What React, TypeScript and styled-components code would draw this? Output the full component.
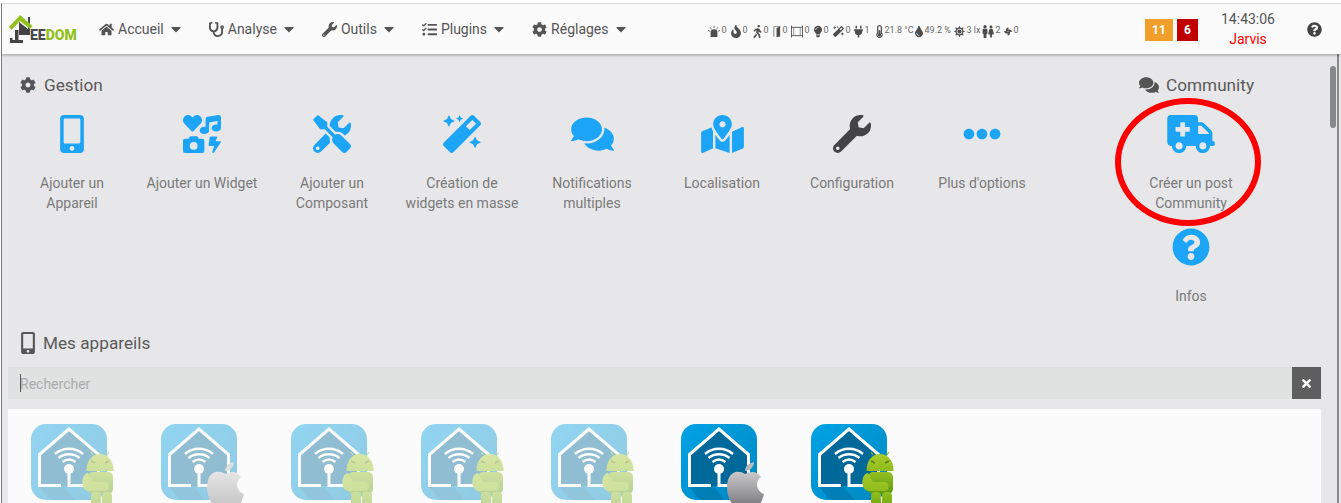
import type { ReactNode } from 'react';
import styled, { createGlobalStyle } from 'styled-components';
import {
  FaAmbulance,
  FaCaretDown,
  FaCog,
  FaComments,
  FaEllipsisH,
  FaFan,
  FaFemale,
  FaFire,
  FaHome,
  FaIcons,
  FaLightbulb,
  FaMagic,
  FaMale,
  FaMapMarkedAlt,
  FaMobileAlt,
  FaPlug,
  FaQuestionCircle,
  FaStethoscope,
  FaSun,
  FaTasks,
  FaThermometerHalf,
  FaTimes,
  FaTint,
  FaTools,
  FaWalking,
  FaWrench,
} from 'react-icons/fa';

const GlobalStyle = createGlobalStyle`
  html, body {
    margin: 0;
    height: 503px;
    overflow: hidden;
    background: #fff;
    font-family: Roboto, "Liberation Sans", sans-serif;
  }
`;

const Page = styled.div`
  height: 500px;
  margin-top: 3px;
  margin-left: 1px;
  display: flex;
  flex-direction: column;
  background: #e7e7e9;
  border-left: 1px solid #777;
  border-top: 1px solid #dcdcdc;
  overflow: hidden;
`;

const Header = styled.header`
  flex: none;
  height: 50px;
  display: flex;
  align-items: center;
  padding: 0 19px 0 6px;
  background: #fafafa;
  box-shadow: 0 1px 3px rgba(0, 0, 0, 0.35);
  position: relative;
  z-index: 2;
`;

const Logo = styled.div`
  width: 71px;
  height: 32px;
  margin-top: 1px;
  display: flex;
  align-items: flex-end;
  svg {
    flex: none;
    width: 26px;
    height: 32px;
  }
`;

const LogoText = styled.span`
  margin: 0 0 3px -4px;
  font-size: 14px;
  line-height: 16px;
  font-weight: 900;
  color: #4a4a4a;
  b {
    color: #93c01f;
    font-weight: 900;
  }
`;

const Menu = styled.nav`
  display: flex;
  gap: 28px;
  margin-left: 20px;
`;

const MenuItem = styled.a`
  display: flex;
  align-items: center;
  gap: 4px;
  font-size: 14px;
  color: #555;
  svg {
    width: 15px;
    height: 15px;
  }
  svg:last-child {
    width: 10px;
    height: 16px;
    margin-left: 3px;
  }
`;

const StatusBar = styled.div`
  display: flex;
  gap: 5px;
  margin-left: 82px;
  margin-top: 4px;
`;

const Stat = styled.span<{ $width: number; $iconWidth: number }>`
  width: ${(p) => p.$width}px;
  display: flex;
  align-items: flex-start;
  gap: 1px;
  font-size: 9px;
  line-height: 10px;
  color: #666;
  white-space: nowrap;
  svg {
    flex: none;
    width: ${(p) => p.$iconWidth}px;
    height: 13px;
    color: #4d4d4d;
  }
  span {
    margin: 0 0 0 1px;
  }
`;

const PeopleIcon = styled.i`
  flex: none;
  display: flex;
  svg {
    width: 6px;
  }
`;

const Badges = styled.div`
  display: flex;
  gap: 4px;
  margin-left: auto;
  margin-top: 2px;
`;

const Badge = styled.span<{ $color: string; $width: number }>`
  width: ${(p) => p.$width}px;
  height: 22px;
  display: flex;
  align-items: center;
  justify-content: center;
  background: ${(p) => p.$color};
  color: #fff;
  font-size: 12px;
  font-weight: 700;
`;

const Clock = styled.div`
  width: 60px;
  margin-left: 20px;
  text-align: center;
  font-size: 14px;
  line-height: 20px;
  color: #555;
  div {
    color: #f00;
  }
`;

const HelpButton = styled.span`
  display: flex;
  margin-left: 29px;
  color: #444;
  font-size: 15px;
`;

const Body = styled.div`
  flex: 1;
  min-height: 0;
  display: flex;
`;

const Content = styled.main`
  flex: 1;
  min-width: 0;
  padding: 19px 6px 0 5px;
`;

const Scrollbar = styled.div`
  flex: none;
  width: 12px;
  padding: 12px 0 0 3px;
  box-sizing: border-box;
  border-right: 2px solid #8a8a8a;
  margin-right: 2px;
`;

const ScrollThumb = styled.div`
  width: 6px;
  height: 62px;
  border-radius: 3px;
  background: #85888d;
`;

const TopRow = styled.div`
  display: flex;
  justify-content: space-between;
  padding-right: 65px;
`;

const SectionTitle = styled.h2`
  margin: 0;
  height: 24px;
  display: flex;
  align-items: center;
  gap: 8px;
  padding-left: 13px;
  font-size: 17.2px;
  font-weight: 400;
  color: #5a5a5a;
  white-space: nowrap;
  svg {
    width: 16px;
    height: 16px;
    color: #555;
  }
`;

const CommunityTitle = styled(SectionTitle)`
  padding-left: 13px;
  gap: 7px;
  svg {
    width: 20px;
    height: 18px;
  }
`;

const TileGrid = styled.div`
  display: flex;
`;

const CommunityColumn = styled.section`
  width: 130px;
  position: relative;
`;

const Tile = styled.a`
  width: 130px;
  height: 113px;
  padding-top: 18px;
  box-sizing: border-box;
  display: flex;
  flex-direction: column;
  align-items: center;
  text-align: center;
  font-size: 14px;
  line-height: 20px;
  color: #7a7a7a;
`;

const TileIcon = styled.span<{ $dark?: boolean; $width?: number }>`
  height: 38px;
  margin-bottom: 20px;
  color: ${(p) => (p.$dark ? '#444448' : '#1ca5f6')};
  svg {
    display: block;
    width: ${(p) => p.$width ?? 38}px;
    height: 38px;
  }
`;

const RedCircle = styled.div`
  position: absolute;
  left: -11px;
  top: 25px;
  width: 146px;
  height: 128px;
  box-sizing: border-box;
  border: 6px solid #f00;
  border-radius: 50%;
`;

const DevicesTitle = styled(SectionTitle)`
  margin-top: 8px;
  padding-left: 14px;
  svg {
    width: 14px;
    height: 22px;
  }
`;

const SearchRow = styled.div`
  display: flex;
  height: 32px;
  margin: 12px 0 10px 1px;
  position: relative;
`;

const SearchInput = styled.input`
  flex: 1;
  min-width: 0;
  border: 0;
  outline: 0;
  padding: 1px 0 0 12px;
  background: #e0e2e1;
  font: 14px Roboto, "Liberation Sans", sans-serif;
  &::placeholder {
    color: #a9abad;
    opacity: 1;
  }
`;

const TextCaret = styled.i`
  position: absolute;
  left: 12px;
  top: 7px;
  width: 1px;
  height: 18px;
  background: #555;
`;

const ClearButton = styled.button`
  flex: none;
  width: 29px;
  border: 0;
  padding: 0;
  display: flex;
  align-items: center;
  justify-content: center;
  background: #5e5e5e;
  color: #fff;
  svg {
    width: 13px;
    height: 13px;
  }
`;

const DevicePanel = styled.div`
  height: 100px;
  margin-left: 1px;
  padding-top: 15px;
  box-sizing: border-box;
  display: flex;
  background: #fbfbfb;
  overflow: hidden;
`;

const DeviceTile = styled.div<{ $faded: boolean }>`
  width: 130px;
  padding-left: 23px;
  box-sizing: border-box;
  opacity: ${(p) => (p.$faded ? 0.42 : 1)};
  svg {
    display: block;
    overflow: visible;
  }
`;

const SirenIcon = () => (
  <svg viewBox="0 0 14 13" fill="currentColor">
    <path d="M3 13V8a4 4 0 0 1 8 0v5z" />
    <path d="M0 5l2.5 1.5M2.5 1.5L4 4M7 0v2.5M11.5 1.5L10 4M14 5l-2.5 1.5" stroke="currentColor" />
  </svg>
);

const DoorIcon = () => (
  <svg viewBox="0 0 9 13" fill="currentColor">
    <path d="M0.5 0.5h8v1H1.5v11h-1z" fill="#777" />
    <path d="M4 2.5l4-1.5v11l-4 1z" />
  </svg>
);

const WindowIcon = () => (
  <svg viewBox="0 0 13 13" fill="none" stroke="currentColor">
    <path d="M0.5 0v13M12.5 0v13M0.5 2h12M0.5 11h12" />
    <path d="M3 2v9M10 2v9" stroke="#888" />
  </svg>
);

const LogoMark = () => (
  <svg viewBox="0 0 26 32">
    <path d="M11 8l9 7V3h2v18H11z" fill="#444" />
    <path d="M12 1l12.5 11-2.5 3L12 7l-8.5 9L1 13z" fill="#93c01f" />
    <path d="M7 16h3.500v10h4.500v3H2v-5h2.500v2H7z" fill="#444" />
  </svg>
);

function AndroidBadge() {
  return (
    <g>
      <path d="M62 31l-2-3M76 31l2-3" stroke="#8fb82c" strokeWidth="1.2" />
      <path d="M55.500 47c0-11 6-17 13.500-17s13.500 6 13.500 17z" fill="url(#droidTop)" />
      <path d="M60 37l4 2M78 37l-4 2" stroke="#5e7d12" strokeWidth="1.4" />
      <rect x="57" y="48" width="25" height="22" rx="5" fill="url(#droidBody)" />
      <path d="M57 49c-7 1-8 16 0 18l17 0c5 0 5-9 0-9H62z" fill="url(#droidTop)" />
      <rect x="60" y="68" width="10" height="22" rx="4" fill="url(#droidBody)" />
      <rect x="71" y="68" width="10" height="22" rx="4" fill="url(#droidBody)" />
    </g>
  );
}

function AppleBadge() {
  return (
    <g>
      <path d="M64 47c0-5 4-8 9-9 0 5-4 9-9 9z" fill="#b9b9bb" />
      <path
        d="M64 50c-6-4-14-3-17 6-3 10 1 24 9 28h20c4-4 6-10 7-14-7-2-10-12-3-17-4-6-10-6-16-3z"
        fill="url(#appleBody)"
      />
    </g>
  );
}

function DeviceIcon({ badge, id }: { badge: 'android' | 'apple'; id: string }) {
  return (
    <svg width="76" height="76" viewBox="0 0 76 76">
      <defs>
        <linearGradient id={`${id}-bg`} x1="0" y1="0" x2="1" y2="1">
          <stop offset="0" stopColor="#00a3e6" />
          <stop offset="1" stopColor="#0087c0" />
        </linearGradient>
        <linearGradient id="droidTop" x1="0" y1="0" x2="0" y2="1">
          <stop offset="0" stopColor="#a5cc2a" />
          <stop offset="1" stopColor="#8fbb1c" />
        </linearGradient>
        <linearGradient id="droidBody" x1="0" y1="0" x2="0" y2="1">
          <stop offset="0" stopColor="#93bf1f" />
          <stop offset="1" stopColor="#5f9a10" />
        </linearGradient>
        <linearGradient id="appleBody" x1="0" y1="0" x2="0" y2="1">
          <stop offset="0" stopColor="#c9c9cb" />
          <stop offset="1" stopColor="#77777a" />
        </linearGradient>
      </defs>
      <rect width="76" height="76" rx="15" fill={`url(#${id}-bg)`} />
      <path d="M38 5L8 31v31h60V31z" fill="#00699a" />
      <path d="M8 62h24l12 14H24q-5 0-8-3z" fill="#0078ad" opacity="0.7" />
      <path
        d="M30 61.500H8.500V30.500L38 5l29.500 25.500v31H46"
        fill="none"
        stroke="#fff"
        strokeWidth="3"
      />
      <g fill="none" stroke="#fff" strokeWidth="2.4">
        <path d="M24 30c8-7 20-7 28 0" />
        <path d="M27.500 34c6-5 15-5 21 0" />
        <path d="M31.500 38c4-3 9-3 13 0" />
      </g>
      <circle cx="38" cy="45" r="5" fill="#fff" />
      <path d="M38 48v13.500h12" fill="none" stroke="#fff" strokeWidth="3" />
      {badge === 'android' ? <AndroidBadge /> : <AppleBadge />}
    </svg>
  );
}

const menuItems: { label: string; icon: ReactNode }[] = [
  { label: 'Accueil', icon: <FaHome /> },
  { label: 'Analyse', icon: <FaStethoscope /> },
  { label: 'Outils', icon: <FaWrench /> },
  { label: 'Plugins', icon: <FaTasks /> },
  { label: 'Réglages', icon: <FaCog /> },
];

const stats: { icon: ReactNode; value: string; width: number; iconWidth: number }[] = [
  { icon: <SirenIcon />, value: '0', width: 18, iconWidth: 12 },
  { icon: <FaFire />, value: '0', width: 17, iconWidth: 10 },
  { icon: <FaWalking />, value: '0', width: 15, iconWidth: 9 },
  { icon: <DoorIcon />, value: '0', width: 13, iconWidth: 8 },
  { icon: <WindowIcon />, value: '0', width: 18, iconWidth: 12 },
  { icon: <FaLightbulb />, value: '0', width: 14, iconWidth: 8 },
  { icon: <FaMagic />, value: '0', width: 16, iconWidth: 11 },
  { icon: <FaPlug />, value: '1', width: 17, iconWidth: 9 },
  { icon: <FaThermometerHalf />, value: '21.8 °C', width: 34, iconWidth: 7 },
  { icon: <FaTint />, value: '49.2 %', width: 34, iconWidth: 8 },
  { icon: <FaSun />, value: '3 lx', width: 23, iconWidth: 11 },
  { icon: <PeopleIcon><FaMale /><FaFemale /></PeopleIcon>, value: '2', width: 17, iconWidth: 6 },
  { icon: <FaFan />, value: '0', width: 14, iconWidth: 8 },
];

const gestionTiles: { label: ReactNode; icon: ReactNode; dark?: boolean; width?: number }[] = [
  { label: <>Ajouter un<br />Appareil</>, icon: <FaMobileAlt /> },
  { label: 'Ajouter un Widget', icon: <FaIcons /> },
  { label: <>Ajouter un<br />Composant</>, icon: <FaTools /> },
  { label: <>Création de<br />widgets en masse</>, icon: <FaMagic /> },
  { label: <>Notifications<br />multiples</>, icon: <FaComments />, width: 43 },
  { label: 'Localisation', icon: <FaMapMarkedAlt />, width: 43 },
  { label: 'Configuration', icon: <FaWrench />, dark: true },
  { label: "Plus d'options", icon: <FaEllipsisH /> },
];

const devices: { badge: 'android' | 'apple'; faded: boolean }[] = [
  { badge: 'android', faded: true },
  { badge: 'apple', faded: true },
  { badge: 'android', faded: true },
  { badge: 'android', faded: true },
  { badge: 'android', faded: true },
  { badge: 'apple', faded: false },
  { badge: 'android', faded: false },
];

export default function App() {
  return (
    <>
      <GlobalStyle />
      <Page>
        <Header>
          <Logo>
            <LogoMark />
            <LogoText>EE<b>DOM</b></LogoText>
          </Logo>
          <Menu>
            {menuItems.map((item) => (
              <MenuItem key={item.label}>
                {item.icon}
                {item.label}
                <FaCaretDown />
              </MenuItem>
            ))}
          </Menu>
          <StatusBar>
            {stats.map((stat, i) => (
              <Stat key={i} $width={stat.width} $iconWidth={stat.iconWidth}>
                {stat.icon}
                <span>{stat.value}</span>
              </Stat>
            ))}
          </StatusBar>
          <Badges>
            <Badge $color="#f0a02a" $width={28}>11</Badge>
            <Badge $color="#c00000" $width={21}>6</Badge>
          </Badges>
          <Clock>
            14:43:06
            <div>Jarvis</div>
          </Clock>
          <HelpButton>
            <FaQuestionCircle />
          </HelpButton>
        </Header>
        <Body>
          <Content>
            <TopRow>
              <section>
                <SectionTitle>
                  <FaCog /> Gestion
                </SectionTitle>
                <TileGrid>
                  {gestionTiles.map((tile, i) => (
                    <Tile key={i}>
                      <TileIcon $dark={tile.dark} $width={tile.width}>{tile.icon}</TileIcon>
                      <span>{tile.label}</span>
                    </Tile>
                  ))}
                </TileGrid>
              </section>
              <CommunityColumn>
                <CommunityTitle>
                  <FaComments /> Community
                </CommunityTitle>
                <Tile>
                  <TileIcon $width={48}><FaAmbulance /></TileIcon>
                  <span>Créer un post<br />Community</span>
                </Tile>
                <Tile>
                  <TileIcon><FaQuestionCircle /></TileIcon>
                  <span>Infos</span>
                </Tile>
                <RedCircle />
              </CommunityColumn>
            </TopRow>
            <DevicesTitle>
              <FaMobileAlt /> Mes appareils
            </DevicesTitle>
            <SearchRow>
              <SearchInput placeholder="Rechercher" />
              <TextCaret />
              <ClearButton><FaTimes /></ClearButton>
            </SearchRow>
            <DevicePanel>
              {devices.map((device, i) => (
                <DeviceTile key={i} $faded={device.faded}>
                  <DeviceIcon badge={device.badge} id={`device-${i}`} />
                </DeviceTile>
              ))}
            </DevicePanel>
          </Content>
          <Scrollbar>
            <ScrollThumb />
          </Scrollbar>
        </Body>
      </Page>
    </>
  );
}
